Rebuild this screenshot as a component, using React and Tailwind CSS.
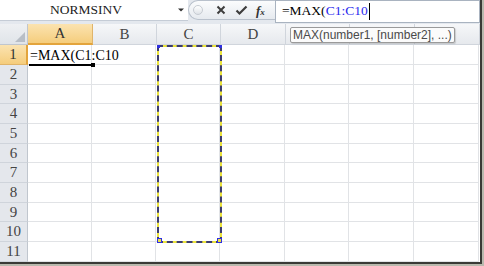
import React from "react";

const COLS = [
  { name: "A", w: 65 },
  { name: "B", w: 64 },
  { name: "C", w: 64 },
  { name: "D", w: 65 },
  { name: "", w: 64 },
  { name: "", w: 65 },
  { name: "", w: 65 },
];

const ROW_H = [20, 20, 19, 20, 20, 19, 20, 20, 19, 20, 20];

const serif = { fontFamily: '"Liberation Serif", "DejaVu Serif", serif' };

function FormulaBar() {
  return (
    <div className="flex h-[24px] bg-[#e4e8ee]">
      {/* name box */}
      <div className="flex h-[21px] w-[188px] items-center bg-white border-b border-[#c5ccd6]">
        <div className="w-[172px] text-center text-[13.5px] text-[#222]" style={serif}>
          NORMSINV
        </div>
        <svg width="10" height="6" viewBox="0 0 10 6" className="ml-[4px]">
          <path d="M2 1.5h6L5 4.5z" fill="#333" />
        </svg>
      </div>
      {/* buttons pill */}
      <div className="flex h-[20px] w-[87px] items-center rounded-l-full border border-r-0 border-[#b9c1cc] bg-gradient-to-b from-[#fbfcfd] to-[#e6eaef] pl-[4px]">
        <div className="h-[10px] w-[10px] rounded-full border border-[#c6cbd2] bg-gradient-to-b from-white to-[#dfe3e8]" />
        <svg width="12" height="12" viewBox="0 0 12 12" className="ml-[12px]">
          <path d="M2.5 2.5l7 7M9.5 2.5l-7 7" stroke="#3d3d3d" strokeWidth="2" />
        </svg>
        <svg width="13" height="12" viewBox="0 0 13 12" className="ml-[8px]">
          <path d="M1.5 6.5l3 3L11.5 2.5" stroke="#3d3d3d" strokeWidth="2.2" fill="none" />
        </svg>
        <div className="ml-[8px] text-[13px] italic font-bold leading-none text-[#333]" style={serif}>
          f<span className="text-[9px]">x</span>
        </div>
      </div>
      {/* formula input */}
      <div className="relative flex h-[23px] flex-1 items-center border border-[#a9b3c0] bg-white pl-[6px]">
        <span className="text-[13.5px] text-black" style={serif}>
          =MAX(<span className="text-[#2a2aee]">C1:C10</span>
        </span>
        <div className="ml-[1px] h-[17px] w-px bg-black" />
        {/* tooltip */}
        <div
          className="absolute left-[14px] top-[26px] z-10 flex h-[16px] w-[165px] items-center rounded-[2px] border border-[#9a9a9a] bg-[#fbfbfb] pl-[2px] text-[12px] text-[#4a4a4a] shadow-[1px_1px_1px_rgba(0,0,0,0.15)]"
          style={{ fontFamily: '"Liberation Sans", Arial, sans-serif' }}
        >
          MAX(number1, [number2], ...)
        </div>
      </div>
    </div>
  );
}

function HeaderRow() {
  return (
    <div className="flex h-[21px]">
      <div className="relative w-[28px] border-r border-b border-[#c0c6ce] bg-gradient-to-b from-[#eef0f3] to-[#e0e4e9]">
        <svg width="10" height="10" viewBox="0 0 10 10" className="absolute bottom-[2px] right-[2px]">
          <path d="M10 0v10H0z" fill="#b8bec6" />
        </svg>
      </div>
      {COLS.map((c, i) => (
        <div
          key={i}
          style={{ width: c.w, ...serif }}
          className={
            i === 0
              ? "flex items-center justify-center border-r border-b-2 border-r-[#e0b46a] border-b-[#e3a43c] bg-gradient-to-b from-[#fbe3b0] to-[#f5cd7c] text-[15px] text-[#333]"
              : "flex items-center justify-center border-r border-b border-[#d0d5dc] bg-gradient-to-b from-[#f6f7f9] to-[#e6e9ed] text-[15px] text-[#444]"
          }
        >
          {c.name}
        </div>
      ))}
    </div>
  );
}

function Rows() {
  return (
    <div className="flex flex-col">
      {ROW_H.map((h, r) => (
        <div key={r} className="flex" style={{ height: h }}>
          <div
            style={serif}
            className={
              r === 0
                ? "flex w-[28px] items-center justify-center border-r-2 border-b border-r-[#e3a43c] border-b-[#e0b46a] bg-gradient-to-b from-[#fbe3b0] to-[#f5cd7c] text-[15px] text-[#333]"
                : "flex w-[28px] items-center justify-center border-r border-b border-r-[#c0c6ce] border-b-[#cfd4db] bg-[#e4e7ec] text-[15px] text-[#444]"
            }
          >
            {r + 1}
          </div>
          {COLS.map((c, i) => (
            <div
              key={i}
              style={{ width: i === 0 ? c.w - 1 : c.w }}
              className="border-r border-b border-[#e1e3e6] bg-white"
            />
          ))}
        </div>
      ))}
    </div>
  );
}

export default function App() {
  return (
    <div className="relative h-[266px] w-[484px] overflow-hidden bg-[#b9b9ae]">
      <div className="relative h-[264px] w-[482px] border-r-2 border-b-2 border-[#3a3a36] bg-white">
        <FormulaBar />
        <HeaderRow />
        <Rows />

        {/* A1 text while editing */}
        <div
          className="absolute left-[30px] top-[46px] flex h-[18px] items-center text-[14px] text-black"
          style={serif}
        >
          =MAX(C1:C10
        </div>
        {/* active cell bottom edge + fill handle */}
        <div className="absolute left-[29px] top-[64px] h-[2px] w-[64px] bg-black" />
        <div className="absolute left-[91px] top-[63px] h-[4px] w-[4px] bg-black" />

        {/* reference marquee around C1:C10 */}
        <div className="absolute left-[157px] top-[45px] h-[198px] w-[65px] border-2 border-[#ece43c]">
          <div className="absolute -inset-[2px] border-2 border-dashed border-[#3c3c70]" />
          <div className="absolute -left-[2px] -bottom-[2px] h-[5px] w-[5px] border border-[#2f2fe0] bg-[#ece43c]" />
          <div className="absolute -right-[2px] -bottom-[2px] h-[5px] w-[5px] border border-[#2f2fe0] bg-[#ece43c]" />
          <div className="absolute -left-[2px] -top-[2px] h-[3px] w-[3px] bg-[#2f2fe0]" />
          <div className="absolute -right-[2px] -top-[2px] h-[3px] w-[3px] bg-[#2f2fe0]" />
        </div>
      </div>
    </div>
  );
}
